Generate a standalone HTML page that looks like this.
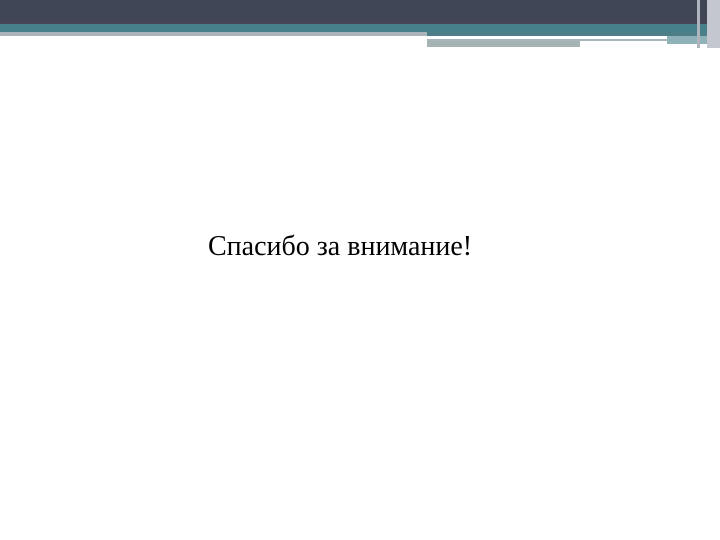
<!DOCTYPE html>
<html><head><meta charset="utf-8"><style>
body{margin:0;width:720px;height:540px;background:#fff;position:relative;overflow:hidden}
div{position:absolute}
</style></head><body>
<div style="left:0;top:0;width:720px;height:24px;background:#404556"></div>
<div style="left:0;top:18px;width:720px;height:6px;background:#454558"></div>
<div style="left:0;top:24px;width:720px;height:8px;background:#47808a"></div>
<div style="left:0;top:32px;width:427px;height:4px;background:#a9b5bb"></div>
<div style="left:427px;top:32px;width:293px;height:4px;background:#4e7f88"></div>
<div style="left:427px;top:36px;width:240px;height:3px;background:#fff"></div>
<div style="left:427px;top:39px;width:240px;height:2px;background:#a9b5bb"></div>
<div style="left:427px;top:41px;width:153px;height:6px;background:#a6b3b5"></div>
<div style="left:667px;top:36px;width:53px;height:8px;background:#8fb2b8"></div>
<div style="left:697px;top:0;width:3px;height:48px;background:#b0b4bc"></div>
<div style="left:707px;top:0;width:13px;height:48px;background:#c4c6d0"></div>
<div style="left:208px;top:231px;font:28px 'Liberation Serif',serif;color:#000;white-space:nowrap">Спасибо за внимание!</div>
</body></html>
